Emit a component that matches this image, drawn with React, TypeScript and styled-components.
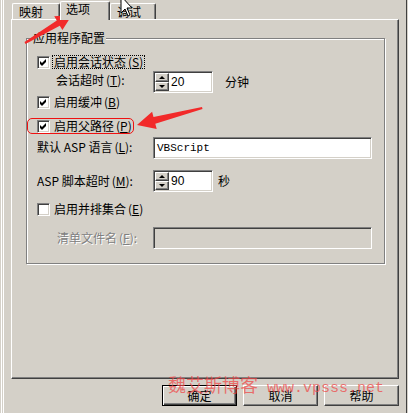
import React from 'react';
import styled, { createGlobalStyle } from 'styled-components';

const BG = '#d4d0c8';

const Global = createGlobalStyle`
  html, body { margin: 0; padding: 0; background: ${BG}; }
  body {
    font-family: "Noto Sans CJK SC", "Noto Sans", sans-serif;
    font-size: 12px;
    color: #000;
  }
`;

const Frame = styled.div`
  position: relative;
  width: 408px;
  height: 413px;
  box-sizing: border-box;
  padding: 0 9px 0 11px;
  display: flex;
  flex-direction: column;
  overflow: hidden;
  box-shadow: inset 1px 0 0 ${BG}, inset 2px 0 0 #fff, inset 3px 0 0 ${BG}, inset 4px 0 0 #fff,
    inset -1px 0 0 ${BG}, inset -2px 0 0 #404040;
`;

const TabRow = styled.div`
  display: flex;
  align-items: flex-end;
  height: 19px;
  padding-left: 1px;
`;

const Tab = styled.div<{ $w: number; $active?: boolean }>`
  box-sizing: border-box;
  width: ${(p) => p.$w}px;
  height: ${(p) => (p.$active ? 19 : 16)}px;
  margin-bottom: ${(p) => (p.$active ? -1 : 0)}px;
  position: relative;
  z-index: ${(p) => (p.$active ? 2 : 0)};
  background: ${BG};
  border-top: 1px solid #fff;
  border-left: 1px solid #fff;
  border-right: 1px solid #404040;
  box-shadow: inset -1px 0 0 #808080;
  border-radius: 2px 2px 0 0;
  padding: ${(p) => (p.$active ? '0 0 0 5px' : '1px 0 0 6px')};
  line-height: 14px;
  white-space: nowrap;
`;

const Panel = styled.div`
  box-sizing: border-box;
  height: 360px;
  border: 1px solid;
  border-color: #fff #404040 #404040 #fff;
  box-shadow: inset -1px -1px 0 #808080;
  padding: 18px 0 0 14px;
`;

const GroupBox = styled.div`
  position: relative;
  box-sizing: border-box;
  width: 359px;
  height: 226px;
  border: 1px solid #808080;
  box-shadow: 1px 1px 0 #fff, inset 1px 1px 0 #fff;
  padding: 16px 0 0 10px;
  display: flex;
  flex-direction: column;
`;

const GroupTitle = styled.span`
  position: absolute;
  top: -8px;
  left: 5px;
  padding: 0 1px;
  background: ${BG};
  line-height: 14px;
`;

const Row = styled.div<{ $mt: number; $h: number }>`
  display: flex;
  align-items: center;
  margin-top: ${(p) => p.$mt}px;
  height: ${(p) => p.$h}px;
`;

const CheckBox = styled.span`
  box-sizing: border-box;
  width: 13px;
  height: 13px;
  background: #fff;
  border: 1px solid;
  border-color: #808080 #fff #fff #808080;
  box-shadow: inset 1px 1px 0 #404040, inset -1px -1px 0 #d4d0c8;
  display: flex;
  align-items: center;
  justify-content: center;
  flex: none;
`;

const CheckLabel = styled.span<{ $focus?: boolean }>`
  margin-left: 2px;
  padding: 0 1px;
  border: 1px ${(p) => (p.$focus ? 'dotted #000' : 'solid transparent')};
  line-height: 12px;
  white-space: nowrap;
`;

const Key = styled.span`
  margin-left: 2px;
  u { text-decoration: underline; text-underline-offset: 1px; }
`;

const FieldLabel = styled.span<{ $indent: number; $lift?: number; $disabled?: boolean }>`
  box-sizing: border-box;
  width: 116px;
  flex: none;
  padding-left: ${(p) => p.$indent}px;
  margin-bottom: ${(p) => p.$lift ?? 0}px;
  line-height: 14px;
  white-space: nowrap;
  color: ${(p) => (p.$disabled ? '#808080' : '#000')};
  text-shadow: ${(p) => (p.$disabled ? '1px 1px 0 #fff' : 'none')};
`;

const Sunken = styled.div`
  box-sizing: border-box;
  border: 1px solid;
  border-color: #808080 #fff #fff #808080;
  box-shadow: inset 1px 1px 0 #404040, inset -1px -1px 0 #d4d0c8;
`;

const SpinBox = styled(Sunken)`
  width: 60px;
  height: 22px;
  display: flex;
  align-items: stretch;
  background: #fff;
  padding: 1px;
`;

const SpinButtons = styled.div`
  display: flex;
  flex-direction: column;
  width: 14px;
  background: ${BG};
`;

const SpinBtn = styled.div`
  flex: 1;
  box-sizing: border-box;
  border: 1px solid;
  border-color: #fff #404040 #404040 #fff;
  box-shadow: inset -1px -1px 0 #808080;
  display: flex;
  align-items: center;
  justify-content: center;
`;

const Tri = styled.span<{ $down?: boolean }>`
  width: 0;
  height: 0;
  border-left: 3px solid transparent;
  border-right: 3px solid transparent;
  ${(p) => (p.$down ? 'border-top: 3px solid #000;' : 'border-bottom: 3px solid #000;')}
`;

const SpinValue = styled.span`
  align-self: center;
  padding-left: 2px;
  font-family: "Liberation Sans", Arial, sans-serif;
  font-size: 12px;
  line-height: 14px;
`;

const Unit = styled.span<{ $gap: number }>`
  margin-left: ${(p) => p.$gap}px;
  line-height: 14px;
`;

const TextField = styled(Sunken)<{ $disabled?: boolean }>`
  width: 219px;
  height: 22px;
  background: ${(p) => (p.$disabled ? BG : '#fff')};
  padding: 0 2px 0 3px;
  display: flex;
  align-items: center;
  font-family: "Liberation Mono", monospace;
  font-size: 11px;
`;

const ButtonRow = styled.div`
  display: flex;
  justify-content: flex-end;
  gap: 6px;
  margin-top: 6px;
`;

const Button = styled.button<{ $default?: boolean }>`
  box-sizing: border-box;
  width: 75px;
  height: 21px;
  padding: 0;
  background: ${BG};
  font-family: inherit;
  font-size: 12px;
  color: #000;
  line-height: 14px;
  ${(p) =>
    p.$default
      ? `border: 1px solid #000;
         box-shadow: inset 1px 1px 0 #fff, inset -1px -1px 0 #404040, inset -2px -2px 0 #808080;`
      : `border: 1px solid;
         border-color: #fff #404040 #404040 #fff;
         box-shadow: inset -1px -1px 0 #808080;`}
`;

const Highlight = styled.div`
  position: absolute;
  left: 27px;
  top: 118px;
  width: 107px;
  height: 16px;
  box-sizing: border-box;
  border: 1px solid #ee1111;
  border-radius: 5px;
  pointer-events: none;
`;

const Watermark = styled.div`
  position: absolute;
  left: 168px;
  top: 374px;
  color: rgba(240, 70, 70, 0.72);
  font-size: 18px;
  line-height: 20px;
  white-space: nowrap;
  pointer-events: none;
`;

const WatermarkLatin = styled.span`
  font-family: "Liberation Mono", monospace;
  font-size: 15px;
`;

const Overlay = styled.svg`
  position: absolute;
  left: 0;
  top: 0;
  pointer-events: none;
`;

const Check = () => (
  <svg width="7" height="7" viewBox="0 0 7 7">
    <polygon points="0,2 2,4 6,0 6,3 2,7 0,5" fill="#000" />
  </svg>
);

const Spinner = ({ value }: { value: string }) => (
  <SpinBox>
    <SpinButtons>
      <SpinBtn>
        <Tri />
      </SpinBtn>
      <SpinBtn>
        <Tri $down />
      </SpinBtn>
    </SpinButtons>
    <SpinValue>{value}</SpinValue>
  </SpinBox>
);

const M = ({ k }: { k: string }) => (
  <Key>
    (<u>{k}</u>)
  </Key>
);

export default function App() {
  return (
    <>
      <Global />
      <Frame>
        <TabRow>
          <Tab $w={48}>映射</Tab>
          <Tab $w={50} $active>
            选项
          </Tab>
          <Tab $w={46}>调试</Tab>
        </TabRow>
        <Panel>
          <GroupBox>
            <GroupTitle>应用程序配置</GroupTitle>
            <Row $mt={0} $h={14}>
              <CheckBox>
                <Check />
              </CheckBox>
              <CheckLabel $focus>
                启用会话状态
                <M k="S" />
              </CheckLabel>
            </Row>
            <Row $mt={2} $h={22}>
              <FieldLabel $indent={19} $lift={4}>
                会话超时
                <M k="T" />:
              </FieldLabel>
              <Spinner value="20" />
              <Unit $gap={12}>分钟</Unit>
            </Row>
            <Row $mt={2} $h={14}>
              <CheckBox>
                <Check />
              </CheckBox>
              <CheckLabel>
                启用缓冲
                <M k="B" />
              </CheckLabel>
            </Row>
            <Row $mt={10} $h={14}>
              <CheckBox>
                <Check />
              </CheckBox>
              <CheckLabel>
                启用父路径
                <M k="P" />
              </CheckLabel>
            </Row>
            <Row $mt={4} $h={22}>
              <FieldLabel $indent={0} $lift={2}>
                默认 ASP 语言
                <M k="L" />:
              </FieldLabel>
              <TextField>VBScript</TextField>
            </Row>
            <Row $mt={11} $h={22}>
              <FieldLabel $indent={0}>
                ASP 脚本超时
                <M k="M" />:
              </FieldLabel>
              <Spinner value="90" />
              <Unit $gap={5}>秒</Unit>
            </Row>
            <Row $mt={10} $h={14}>
              <CheckBox />
              <CheckLabel>
                启用并排集合
                <M k="E" />
              </CheckLabel>
            </Row>
            <Row $mt={11} $h={22}>
              <FieldLabel $indent={20} $disabled>
                清单文件名
                <M k="F" />:
              </FieldLabel>
              <TextField $disabled />
            </Row>
          </GroupBox>
        </Panel>
        <ButtonRow>
          <Button $default>确定</Button>
          <Button>取消</Button>
          <Button>帮助</Button>
        </ButtonRow>

        <Highlight />
        <Watermark>
          魏艾斯博客<WatermarkLatin> www.vpsss.net</WatermarkLatin>
        </Watermark>
        <Overlay width="408" height="413" viewBox="0 0 408 413">
          <polygon
            points="24.5,42.1 25.5,43.9 59.8,25.8 62.4,30.1 72,15 54.2,16.3 56.8,20.6"
            fill="#f22a2a"
          />
          <polygon
            points="202,107 202.5,109 155.3,123.8 156.7,129.1 137,125 152.1,111.7 153.5,117"
            fill="#f22a2a"
          />
          <polygon
            points="121,-4 121,13 125,9 128,16 130,15 127,8 132,8"
            fill="#fff"
            stroke="#000"
            strokeWidth="1"
            strokeLinejoin="miter"
          />
        </Overlay>
      </Frame>
    </>
  );
}
